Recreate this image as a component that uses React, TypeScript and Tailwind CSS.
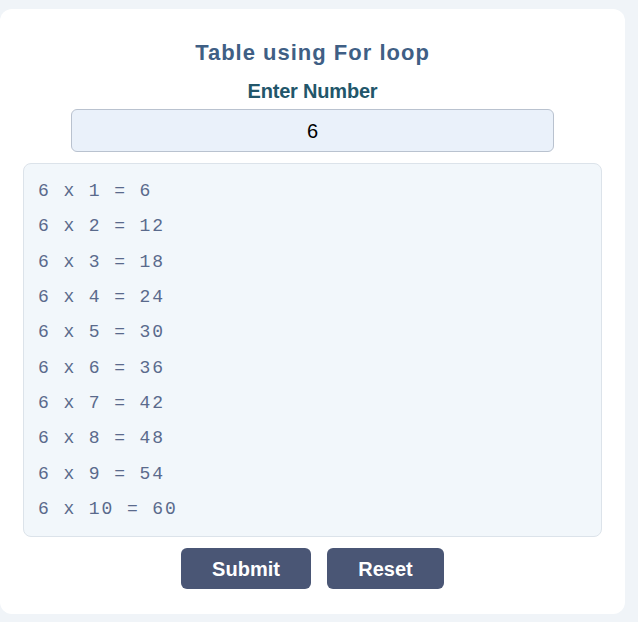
import React from "react";

export default function App() {
  const n = 6;
  const rows = Array.from({ length: 10 }, (_, i) => `${n} x ${i + 1} = ${n * (i + 1)}`);
  return (
    <div className="min-h-[622px] w-[638px] bg-[#f0f4f8] pt-[9px]">
      <div className="w-[625px] h-[605px] bg-white rounded-[12px] px-[23px] pt-[30px] flex flex-col items-center" style={{ fontFamily: "'Liberation Sans', Arial, sans-serif" }}>
        <h1 className="text-[22px] leading-[28px] font-bold tracking-[1px] text-[#3f5f85]">Table using For loop</h1>
        <div className="mt-[12px] text-[20px] leading-[24px] font-bold text-[#22566a] tracking-[-0.2px]">Enter Number</div>
        <div className="mt-[6px] w-[483px] h-[43px] rounded-[6px] border border-[#b9c2cf] bg-[#eaf1fa] flex items-center justify-center text-[20px] text-black">
          6
        </div>
        <div className="mt-[11px] w-full h-[374px] rounded-[8px] border border-[#dce3ea] bg-[#f2f7fb] pl-[14px] pt-[10px]" style={{ fontFamily: "'Liberation Mono', 'Courier New', monospace" }}>
          {rows.map((r) => (
            <div key={r} className="h-[35.33px] leading-[35.33px] text-[18px] tracking-[1.9px] text-[#5a6a8c] whitespace-pre">
              {r}
            </div>
          ))}
        </div>
        <div className="mt-[11px] flex gap-[16px]">
          <button className="h-[41px] w-[130px] rounded-[6px] bg-[#4a5675] text-white text-[20px] font-bold">Submit</button>
          <button className="h-[41px] w-[117px] rounded-[6px] bg-[#4a5675] text-white text-[20px] font-bold">Reset</button>
        </div>
      </div>
    </div>
  );
}
